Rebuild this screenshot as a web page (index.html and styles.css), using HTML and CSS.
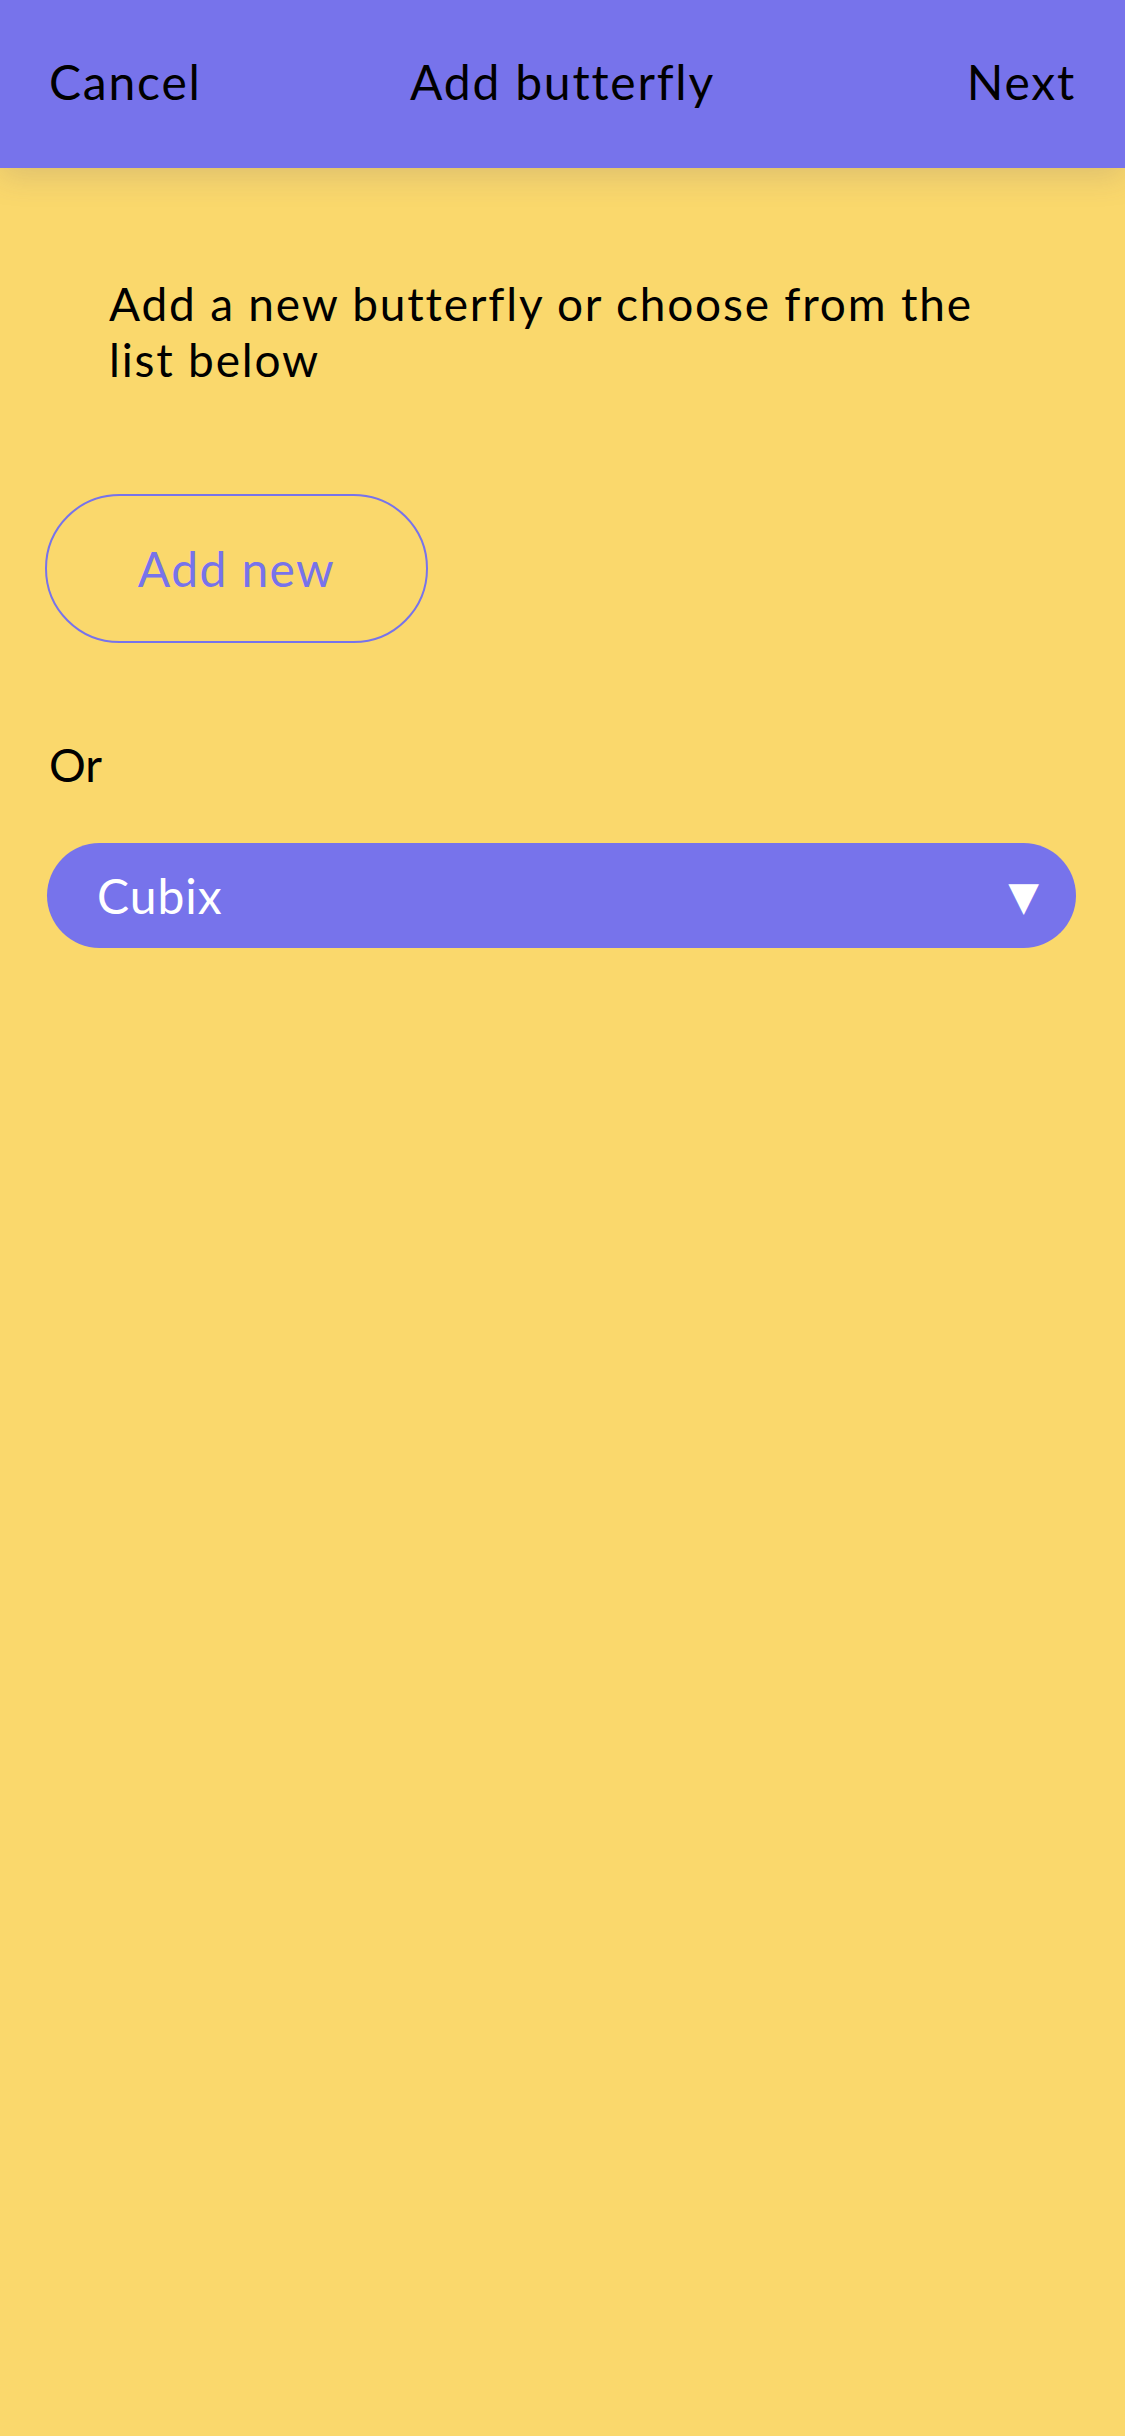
FILE: index.html
```html
<!DOCTYPE html>
<html lang="en">
<head>
<meta charset="utf-8">
<title>Add butterfly</title>
<link rel="stylesheet" href="styles.css">
</head>
<body>
<header class="topbar">
  <span class="topbar-btn">Cancel</span>
  <span class="topbar-title">Add butterfly</span>
  <span class="topbar-btn">Next</span>
</header>
<main class="content">
  <p class="intro">Add a new butterfly or choose from the list below</p>
  <div class="add-row">
    <button class="add-btn" type="button">Add new</button>
  </div>
  <p class="or">Or</p>
  <div class="select">
    <span class="select-value">Cubix</span>
    <span class="select-arrow">▼</span>
  </div>
</main>
</body>
</html>
```

FILE: styles.css
```css
html, body {
  margin: 0;
  padding: 0;
}
body {
  background: #fad86c;
  min-height: 2436px;
  font-family: Lato, "Open Sans", sans-serif;
  color: #000;
}
.topbar {
  height: 168px;
  background: #7773eb;
  display: flex;
  align-items: center;
  justify-content: space-between;
  padding: 0 49px 6px;
  box-sizing: border-box;
  box-shadow: 0 8px 30px rgba(90, 80, 120, 0.18);
  position: relative;
  font-size: 48px;
  letter-spacing: 1.8px;
}
.topbar-title {
  position: absolute;
  left: 0;
  right: 0;
  text-align: center;
  pointer-events: none;
}
.content {
  padding: 0 49px;
}
.intro {
  margin: 0;
  padding: 108px 0 0 60px;
  width: 900px;
  font-size: 46px;
  line-height: 56px;
  letter-spacing: 1.8px;
}
.add-row {
  margin-top: 106px;
}
.add-btn {
  width: 383px;
  height: 149px;
  margin-left: -4px;
  border: 2px solid #7773eb;
  border-radius: 75px;
  background: transparent;
  color: #7773eb;
  font-family: Lato, "Open Sans", sans-serif;
  font-size: 48px;
  letter-spacing: 1.4px;
}
.or {
  margin: 94px 0 0 0;
  font-size: 46px;
  line-height: 56px;
}
.select {
  margin-top: 50px;
  margin-left: -2px;
  height: 105px;
  background: #7773eb;
  border-radius: 53px;
  display: flex;
  align-items: center;
  justify-content: space-between;
  padding: 0 36px 0 50px;
  color: #fff;
  font-size: 48px;
  letter-spacing: 1px;
}
.select-arrow {
  font-size: 40px;
  font-family: "DejaVu Sans", sans-serif;
}
```
